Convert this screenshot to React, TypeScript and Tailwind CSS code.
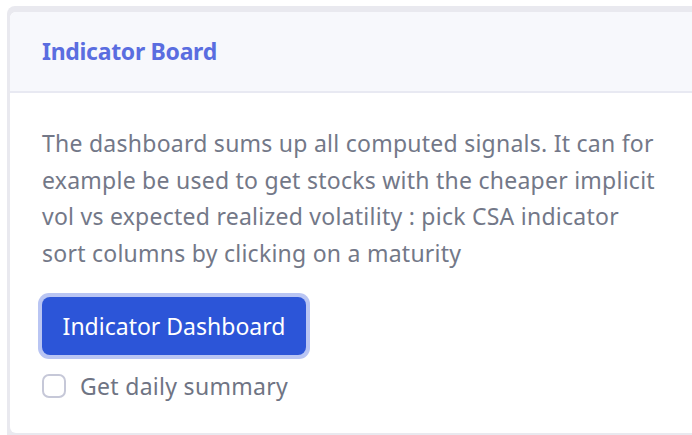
import React from "react";

const lines = [
  "The dashboard sums up all computed signals. It can for",
  "example be used to get stocks with the cheaper implicit",
  "vol vs expected realized volatility : pick CSA indicator",
  "sort columns by clicking on a maturity",
];

export default function App() {
  return (
    <div className="w-[692px] h-[435px] overflow-hidden bg-white pl-[7px] pt-[6px]" style={{ fontFamily: '"Noto Sans", sans-serif' }}>
      <div className="h-full bg-[#e9e9ef] pl-[3px] pt-[6px] rounded-tl-[8px]">
        <div className="h-[421px] w-[690px] bg-white rounded-l-[6px] overflow-hidden border-r border-[#e4e5ee]">
          <div className="h-[81px] bg-[#f7f8fc] border-b-2 border-[#e8e9f2] flex items-center pl-[32px]">
            <h2 className="text-[23px] font-bold text-[#5a6de0] tracking-[-0.3px]">Indicator Board</h2>
          </div>
          <div className="pl-[32px] pt-[32px]">
            <p className="text-[23px] leading-[36.7px] text-[#737888] tracking-[0.25px]">
              {lines.map((l) => (
                <span key={l} className="block whitespace-nowrap">{l}</span>
              ))}
            </p>
            <div className="mt-[21px] ml-[-4px] inline-flex rounded-[11px] bg-[#b9c5f3] p-[4px]">
              <button className="h-[58px] w-[264px] rounded-[8px] bg-[#2c55d8] text-white text-[23px] tracking-[0px]">
                Indicator Dashboard
              </button>
            </div>
            <label className="mt-[12px] flex items-center gap-[14px] h-[30px]">
              <span className="w-[24px] h-[24px] rounded-[7px] border-2 border-[#c6c8d8] bg-white" />
              <span className="text-[23px] text-[#6f7484] tracking-[0.3px]">Get daily summary</span>
            </label>
          </div>
        </div>
      </div>
    </div>
  );
}
